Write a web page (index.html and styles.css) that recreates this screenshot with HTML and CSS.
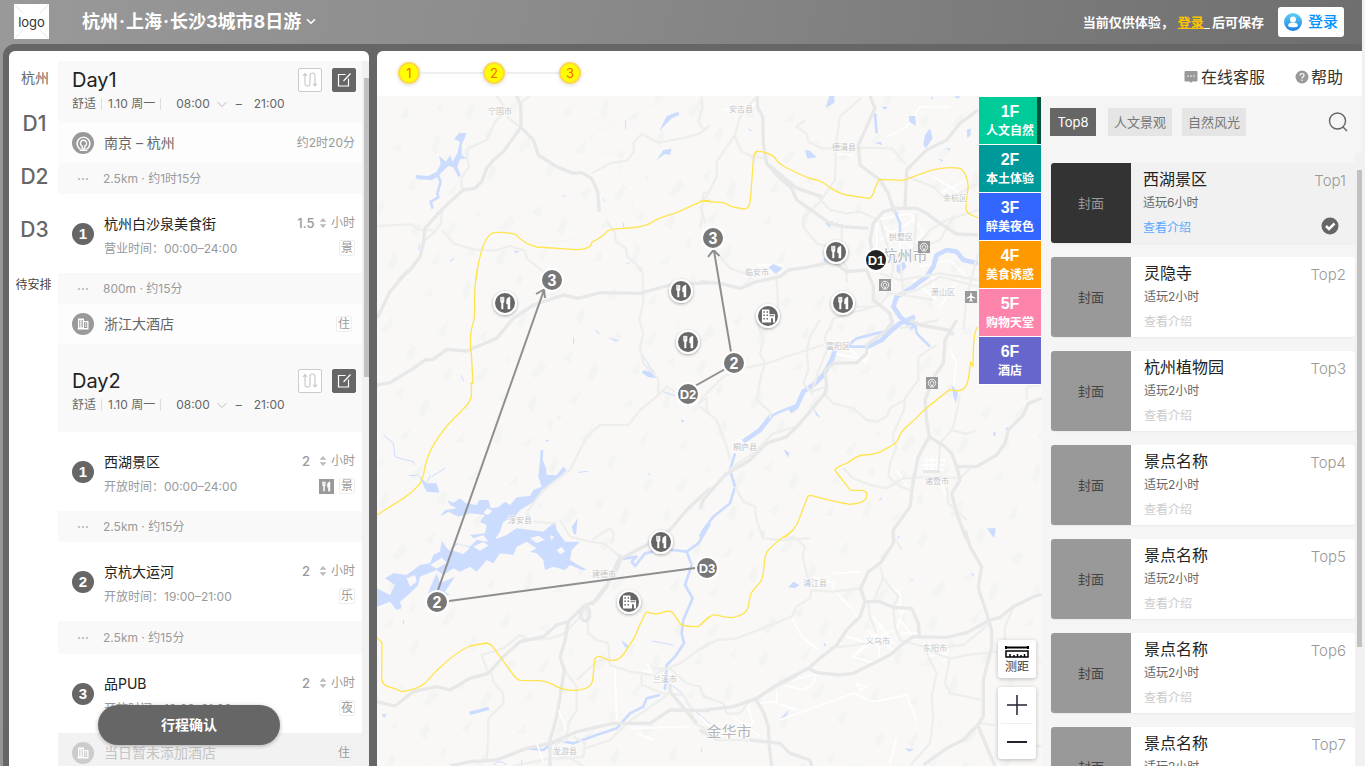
FILE: index.html
```html
<!DOCTYPE html>
<html lang="zh-CN">
<head>
<meta charset="utf-8">
<title>杭州·上海·长沙3城市8日游</title>
<link rel="stylesheet" href="styles.css">
</head>
<body>
<svg class="defs" aria-hidden="true">
  <symbol id="i-fork" viewBox="0 0 14 14"><path d="M2 1v4.400c0 .8.5 1.200 1 1.400V13h1.600V6.800c.6-.2 1-.6 1-1.400V1h-.9v3.800h-.5V1h-1v3.800h-.4V1zM11.500 1C9 1.300 8 3 8 5v3h1.300v5h2.200z" fill="currentColor" stroke="currentColor" stroke-width=".4"/></symbol>
  <symbol id="i-hotel" viewBox="0 0 16 14"><path fill="currentColor" fill-rule="evenodd" d="M1 0h8v5h6v9h-2.300V9.500h-2V14H1zM2.500 2v1.600h1.600V2zm3.400 0v1.600h1.600V2zM2.500 5.500v1.600h1.600V5.500zm3.400 0v1.600h1.600V5.500zM2.500 9v1.600h1.600V9zm3.400 0v1.600h1.600V9zM9 6.200v1h5v-1z"/></symbol>
  <symbol id="i-tower" viewBox="0 0 14 14"><path fill="currentColor" fill-rule="evenodd" d="M2 1.500h6V4h4.500v8.500H1.500V11.500H2zM3.200 3v7.500h.7V3zm1.500 0v7.500h.7V3zm1.500 0v7.500h.7V3zM8 5.300v5.800h3.200V5.300zm.9 1h1.400v1.200H8.900zm0 2.200h1.400v1.200H8.900z"/></symbol>
  <symbol id="i-metro" viewBox="0 0 16 16"><path d="M5 13.200A6 6 0 1 1 11 13.200M4.500 14.300h7" fill="none" stroke="currentColor" stroke-width="1.400"/><path d="M6.800 10.500a2.900 2.900 0 1 1 2.400 0v2.500H6.800z" fill="none" stroke="currentColor" stroke-width="1.300"/></symbol>
  <symbol id="i-route" viewBox="0 0 16 18"><path d="M3 3v9.500a2.500 2.500 0 0 0 5 0v-8a2.500 2.500 0 0 1 5 0V15M1 5l2-2.500L5 5M11 12.500l2 2.500 2-2.500" fill="none" stroke="currentColor" stroke-width="1.200"/></symbol>
  <symbol id="i-edit" viewBox="0 0 16 16"><path d="M9.500 2.500h-7v11.500h10V6.500M7.500 9L14.500 1.500" fill="none" stroke="currentColor" stroke-width="1.200"/></symbol>
  <symbol id="i-sort" viewBox="0 0 8 12"><path d="M4 0l4 4.500H0zM4 12l4-4.500H0z" fill="currentColor"/></symbol>
  <symbol id="i-down" viewBox="0 0 10 7"><path d="M.7 1.200L5 5.500 9.300 1.200" fill="none" stroke="currentColor"/></symbol>
</svg>
<div class="page">
  <header class="top">
    <div class="logo"><svg viewBox="0 0 35 35" aria-hidden="true"><path d="M1 1l8 8M34 1l-8 8M1 34l8-8M34 34l-8-8" stroke="#e4e4e4"/></svg><span>logo</span></div>
    <button class="trip">杭州<i>·</i>上海<i>·</i>长沙3城市8日游<svg viewBox="0 0 10 7"><path d="M1 1.200L5 5.200 9 1.200" fill="none" stroke="#fff" stroke-width="1.600"/></svg></button>
    <p class="hint">当前仅供体验，<a href="#login">登录<span>&nbsp;&nbsp;</span></a>后可保存</p>
    <button class="login"><svg viewBox="0 0 18 18"><defs><linearGradient id="g" x2="0" y2="1"><stop stop-color="#5fd0f7"/><stop offset="1" stop-color="#1f7fe0"/></linearGradient></defs><circle cx="9" cy="9" r="9" fill="url(#g)"/><circle cx="9" cy="6.500" r="3" fill="#fff"/><path d="M4 13c0-2.500 2-3.500 5-3.500s5 1 5 3.500c-1 1.700-9 1.700-10 0z" fill="#fff"/></svg>登录</button>
  </header>

  <div class="shell">
    <section class="plan">
      <nav class="days">
        <span class="city">杭州</span>
        <a href="#d1">D1</a><a href="#d2">D2</a><a href="#d3">D3</a>
        <a href="#todo" class="todo">待安排</a>
      </nav>
      <div class="timeline">
        <div class="day" id="d1">
          <div class="day-top"><h2>Day1</h2><button class="sq" aria-label="路线"><svg class="route"><use href="#i-route"/></svg></button><button class="sq sq-dark" aria-label="编辑"><svg class="edit"><use href="#i-edit"/></svg></button></div>
          <div class="meta"><span>舒适</span><i></i><span>1.10 周一</span><i></i><button class="time">08:00<svg><use href="#i-down"/></svg></button><span class="dash">–</span><span>21:00</span></div>
        </div>
        <div class="line"><span class="mark soft"><svg class="metro"><use href="#i-metro"/></svg></span><span class="line-name">南京 – 杭州</span><span class="note">约2时20分</span></div>
        <div class="leg"><b>···</b>2.5km · 约1时15分</div>
        <div class="spot"><span class="mark">1</span><div class="info"><h3>杭州白沙泉美食街</h3><p>营业时间：00:00–24:00</p></div><div class="side"><label><input value="1.5"><svg><use href="#i-sort"/></svg>小时</label><div class="tags"><em>景</em></div></div></div>
        <div class="leg"><b>···</b>800m · 约15分</div>
        <div class="line"><span class="mark soft"><svg><use href="#i-tower"/></svg></span><span class="line-name">浙江大酒店</span><em class="inset">住</em></div>
        <div class="day day-next" id="d2">
          <div class="day-top"><h2>Day2</h2><button class="sq" aria-label="路线"><svg class="route"><use href="#i-route"/></svg></button><button class="sq sq-dark" aria-label="编辑"><svg class="edit"><use href="#i-edit"/></svg></button></div>
          <div class="meta"><span>舒适</span><i></i><span>1.10 周一</span><i></i><button class="time">08:00<svg><use href="#i-down"/></svg></button><span class="dash">–</span><span>21:00</span></div>
        </div>
        <div class="spot"><span class="mark">1</span><div class="info"><h3>西湖景区</h3><p>开放时间：00:00–24:00</p></div><div class="side"><label><input value="2"><svg><use href="#i-sort"/></svg>小时</label><div class="tags"><span class="food"><svg><use href="#i-fork"/></svg></span><em>景</em></div></div></div>
        <div class="leg"><b>···</b>2.5km · 约15分</div>
        <div class="spot"><span class="mark">2</span><div class="info"><h3>京杭大运河</h3><p>开放时间：19:00–21:00</p></div><div class="side"><label><input value="2"><svg><use href="#i-sort"/></svg>小时</label><div class="tags"><em>乐</em></div></div></div>
        <div class="leg leg-last"><b>···</b>2.5km · 约15分</div>
        <div class="spot"><span class="mark">3</span><div class="info"><h3>品PUB</h3><p>开放时间：19:00–21:00</p></div><div class="side"><label><input value="2"><svg><use href="#i-sort"/></svg>小时</label><div class="tags"><em>夜</em></div></div></div>
        <div class="line line-empty"><span class="mark pale"><svg><use href="#i-tower"/></svg></span><span class="line-name">当日暂未添加酒店</span><em class="inset">住</em></div>
      </div>
      <div class="bar bar-plan"><i></i></div>
      <button class="confirm">行程确认</button>
    </section>

    <section class="main">
      <div class="tools">
        <ol class="steps"><li>1</li><li>2</li><li>3</li></ol>
        <a href="#chat" class="help"><svg viewBox="0 0 14 14"><path d="M1.500 1h11a1 1 0 0 1 1 1v8.500a1 1 0 0 1-1 1H8.300L7 13l-1.300-1.500H1.500a1 1 0 0 1-1-1V2a1 1 0 0 1 1-1z" fill="#999"/><path d="M3.500 5.500h1.300v1.300H3.500zM6.400 5.500h1.300v1.300H6.400zM9.300 5.500h1.300v1.300H9.300z" fill="#fff"/></svg><span>在线客服</span></a>
        <a href="#help" class="help ask"><svg viewBox="0 0 14 14"><circle cx="7" cy="7" r="6.500" fill="#999"/><path d="M5 5.600C5 4.300 5.900 3.500 7 3.500s2 .8 2 1.900C9 6.800 7 6.900 7 8.500" fill="none" stroke="#fff" stroke-width="1.200"/><circle cx="7" cy="10.300" r=".8" fill="#fff"/></svg><span>帮助</span></a>
      </div>
      <div class="work">
        <div class="mapbox">
          <svg class="map" viewBox="377 96 665 670" preserveAspectRatio="xMidYMid slice" role="img" aria-label="地图">
            <defs>
              <pattern id="hills" width="173" height="149" patternUnits="userSpaceOnUse" patternTransform="rotate(-12)"><path d="M8 12l9-6 3 5-8 8zM40 22l12-9 2 4-9 10zM75 6l4 5-3 5zM95 30l14-12 3 8-12 9zM20 50l11-11-2 12zM58 47l8-5-2 10zM84 60l9-9 4 4-8 12zM6 80l12-8-3 10zM44 88l9-16 3 6-7 14zM70 98l14-8-5 10zM100 84l6-7 2 5-5 8zM130 20l12-5-6 12zM150 44l10-14 4 6-9 13zM126 64l15-8-9 13zM12 120l14-12-6 15zM50 132l12-6-4 10zM92 126l10-13 2 8-8 11zM130 104l16-12-4 12-10 5zM150 134l8-9 4 4-7 11z" fill="#f4f4f3"/></pattern>
              <filter id="drop" x="-50%" y="-50%" width="200%" height="200%"><feDropShadow dx="0" dy="1" stdDeviation="1.500" flood-opacity=".35"/></filter>
            </defs>
            <rect x="377" y="96" width="665" height="670" fill="#f9f8f7"/><rect x="377" y="96" width="665" height="670" fill="url(#hills)"/>

            <g class="tile" transform="translate(370 510) scale(.333333)">
              <path class="water" d="M232-30L250-22 270-35 288-20 320-15 328-30 355-30 362-5 385-8 405-25 420-15 440-38 480-42 490-60 515-70 505-100 510-150 512-180 520-180 518-150 528-125 530-105 560-105 580-130 590-120 565-95 540-75 500-30 450 0 435 20 400 35 390 65 375 88 410 75 440 55 480 60 520 65 555 35 560 60 585 95 630 95 605 120 600 150 650 180 635 180 600 165 585 180 550 170 525 180 520 150 500 130 480 125 500 115 470 95 440 110 430 135 390 130 370 160 350 150 320 185 300 170 270 185 250 175 220 195 200 180 150 200 145 225 120 250 90 275 95 295 80 300 60 275 21 290 21 235 60 255 75 225 45 205 70 190 110 195 130 180 150 165 180 160 190 135 210 125 215 92 235 120 260 100 300 110 320 90 355 95 340 75 310 85 300 75 345 70 350 45 330 35 345 15 300 10 265 20 235 5 210 20 225 0 260-5 240-15zM200 190l10 30 45-20-30 45 15 10-40 0-30 5 10-25z"/>
              <path class="land" d="M235 120l30-18 35 12-20 18-25-8zM180 165l35-22 15 15-30 18zM310 110l30-15 15 12-25 15zM110 205l25-10 5 20-20 15zM480 85l25-8 20 12-25 10zM540 75l12 5-8 12zM340 10l12-15 15 8-12 12zM560 120l15-10 10 15-15 8z"/>
              <path class="water" d="M297 605L355 590 358 600 300 615zM35 612L50 612 42 625zM755 390l22 18-5 8-10-8zM605 50l18-25-5 50-8-5z"/>
              <path class="river" d="M1020 40L985 100 950 125 965 165 945 225 968 265 940 330 935 370 942 400 915 440 890 465 885 540M860 118L910 120 950 125M750 148L800 140 785 155 795 168 825 130 850 125M470 715L520 720 560 690 610 700 680 675 740 655 780 610 820 590 830 565 870 555"/>
              <path class="creek" d="M885 510L940 552M950 580L1020 642M845 393L910 405M100 330v12M370 765q20-20 40 0M455 750v18M995 715v12"/>
              <path class="road" d="M365 490L370 515 400 550 400 580 355 625 355 680 350 750M583 480L620 530 620 600 595 640 590 690M650 290L655 370 680 390 715 400 720 465 780 485 850 495 880 480 930 460 1020 395M620 510L680 455 715 445M570 30L600 80 660 95 700 100 745 135M665 90L720 55 732 70 725 100M490 35L560 40M355 490L335 435 400 415 450 375 480 390 540 385 585 370 630 320 650 290M815 495V525L880 550 940 555 960 590 975 640 1020 665M850 475L900 475 950 520 990 530 1000 560 1020 565M590 690L560 700 550 730 600 745 640 740 645 700 610 680M645 715L720 690 770 640 900 550M430 768L540 745 600 745 640 768"/>
              <path class="road hw" d="M21 575L75 588 130 545 200 530 240 540 300 505 355 490 400 440 450 395 520 380 560 345 595 335 640 290 680 270 710 230 745 150 830 105 900 60 950 0 1020-65M595 335L583 400 570 440 583 480 570 560 560 620 540 690 540 768M240 768L300 755 380 750 470 715 540 700 620 665 730 640 840 640 900 600 1020 602M900 520L900 545 980 640M650 290a14 22 0 1 0 2 40a14 22 0 0 0-2-40M745 135Q760 140 735 190L665 285"/>
              <path class="street" d="M735 475L740 630M565 600L590 660M830 460l15 30-30-10M780 655L960 650M800 670l50 20M500 700l20 55"/>
              <path class="edge" d="M21 383L36 398 35 500Q35 525 55 530 75 535 95 545 140 540 165 520 200 480 215 468 260 425 300 408L350 399Q360 400 370 412L430 495Q440 508 450 511L510 512Q540 517 560 530 585 542 610 541 665 540 668 510L674 450Q678 435 695 441 720 455 740 450 760 440 775 410 795 385 805 355L825 312Q830 303 840 309 865 315 880 306 900 300 910 310L930 340Q935 350 985 350L1020 319"/>
            </g>
            <g class="tile" transform="translate(370 270) scale(.333333)">
              <path class="water" d="M815 308L820 300 840 305 825 290 850 300 862 325 835 322zM145 615L170 640 200 640 208 668 170 665zM560 445l20-10-15 10zM525 510l12 0-4 6zM832 608l10 12-4-10zM932 450l10 0-4 10zM670 175l20 15-5 2zM710 200l38 12-12 2zM385 745l20-10 15 8z"/>
              <path class="creek" d="M40 495L70 520 75 560 100 568 130 575 132 585M170 638L182 615M185 620L225 595M117 617L145 615M273 315l8 18M611 202v20M815 250l30 50M835 400l40-35M880 365l35 12M625 607l28-3"/>
              <path class="road" d="M800-10L818 10 820 95 808 150 820 190 810 230 820 280 865 325 865 375M915 365L890 350 865 375 810 420 775 465 690 465 650 500 600 600 520 660 475 720 470 750M985 400L1010 385 1010 420 1020 430"/>
              <path class="road hw" d="M115 0L60 65 21 145M21 345L60 338 130 295 165 270 190 268 230 238 290 243 380 205 430 145 490 105 580 75 625 85 690 68 810 70 900 45 1020 38"/>
              <path class="edge" d="M322 0Q312 50 314 110 315 150 305 175 298 210 304 250L309 340 303 338Q308 380 298 395 285 415 250 447 180 520 165 590 160 625 150 640 130 665 100 685L21 735"/>
            </g>
            <g class="tile" transform="translate(370 40) scale(.333333)">
              <path class="water" d="M290 280L268 278 252 297 270 305 262 340 248 365 240 345 228 365 207 347 212 372 200 395 175 408 137 405 140 418 185 420 205 410 212 400 235 378 250 382 265 412 272 405 262 380 270 358 290 355 275 345 275 315zM868 273L890 228 925 215 928 225 905 235zM860 360L880 330 905 326 900 345 885 342zM575 462l14 10-8-2zM695 473l14 14-10-6zM240 662l14-12-8 14zM432 630l18 6-14 3z"/>
              <path class="river" d="M205 408L212 425 202 460 205 472 182 485 188 506"/>
              <path class="creek" d="M767 240v28M760 548v16M150 610l-5 20M770 672l8-4"/>
              <path class="road dash" d="M655 235L730 230 735 260 680 270 660 300 690 340 750 335 755 430 790 470 790 515 820 515M660 550L640 580 600 600 500 610 440 580 360 555M820 168L835 195 860 200 880 168"/>
              <path class="road" d="M21 558L125 553 150 570 190 570M215 515L213 550 190 580 165 600M412 210L375 245 350 300 295 325 290 350 298 380 275 410 275 445M380 168L400 195 415 235 453 262M480 168L455 185M215 570L250 610 310 628 375 632 420 618 465 632 470 655 520 695M710 543L733 575 738 605 768 625 772 650 818 690M665 400L725 368 770 362 792 335 790 310 815 282 865 308 950 292 990 280 1020 255M995 168L998 205 985 245 1000 268M1020 455L1000 460 995 520 1008 550"/>
              <path class="road hw" d="M440 168L452 195 453 262 400 335 370 360 350 385 335 425 315 445 280 450 240 485 205 520 165 565 160 610 150 650 120 690 85 720M453 262L490 300 505 345 560 380 610 400 635 398 665 415 683 455 688 515"/>
              <path class="edge" d="M317 720Q335 590 370 578 410 575 438 584 460 610 500 621L620 629Q665 628 665 607 700 590 710 575 725 565 760 565 820 562 840 550 860 535 920 518 980 490 1000 482L1020 481"/>
            </g>
            <g class="tile" transform="translate(700 80) scale(.333333)">
              <path class="street" d="M530 420l100-20 40 60-60 70-80 10zM550 440l110 80M540 480l100-60M600 400v140M700 290l100 60M720 340l80-40M660 560l90-20 60 60M640 600l70 60M700 560v110M720 680l60-90M70 90l100-20-40 30M400 220l60 5M170 555h80M560 170l60-30 40-60 90 0"/>
              <path class="water" d="M388 48h15v20l-25 15zM315 210l15 2 20 20-28 4zM627 108l18 0 3 30-20-12zM675 165l15-20 8 30-20 30-8-10zM545 80l18 0-8 10zM525 190l18-5 3 10zM800 150l12-5 0 20-10 10zM740 205l10-2-2 12zM715 235l14 5-4 6zM760 50l22-2-8 8zM205 562l15-10 28 12-20 18zM370 540l8-14 12 18-12 10zM590 555L612 545 620 560 600 582 590 575zM375 430l25-8-12 20zM140 142l18 12-8-2zM205 348l28 2zM285 450l12 12zM692 50l8 0-4 10z"/>
              <path class="river wide" d="M834 550L790 540 770 515 740 510 710 525 700 560 680 590 640 620 590 650 580 680 600 710 640 745"/>
              <path class="river" d="M575 370L600 430 600 460M525 100L530 160"/>
              <path class="road" d="M105 170L125 215 160 230 195 235M165 55L120 110 105 165 50 245 50 290 20 350 0 365M0 65L8 80 0 100M485 52L420 110 408 190 405 300 360 365 310 415 310 440 350 490 400 505 440 560 440 610M315 120L290 140 320 160 325 185 365 205 480 203 575 205 615 250M240 300L350 345 390 390 440 400 480 395 535 420M0 445L10 400 0 380M60 530L90 565 150 585M230 595L235 690M620 290L700 320 740 360 834 310M834 390L740 420 690 450 650 500 610 520M834 520L800 650 790 750M600 640L650 630 720 590 834 620M390 750L400 715 450 700 540 675 570 640 640 650 700 660M525 530L640 535 650 400M600 530L610 640M650 510L720 480 760 410M425 430V540M540 580L600 600 720 580 834 600M470 680L520 680M540 420L580 560 560 650M715 720L600 745M190 750L240 690"/>
              <path class="road hw" d="M172 48L172 80 188 110 190 190 200 250 235 290 275 325 290 360 340 395 390 430 430 440 505 445M200 250L290 325 365 350M510 48L525 85 500 140 475 195 480 255 540 300 565 340 583 400M834 90L780 130 740 180 680 210 660 230 620 270 615 380M500 570L520 530 510 480 520 430 550 395 590 385 650 385 680 400 720 430 770 462 834 465M0 605L60 610 120 625 170 605 240 590 265 570 320 562 400 545 440 575 500 570 520 620 520 660 570 700 580 750"/>
              <path class="edge" d="M0 363L70 368Q80 372 95 380L130 387Q150 388 152 350L160 240Q162 212 175 214 200 215 222 230 235 250 250 258 300 285 335 297 350 298 360 303 375 310 390 323 420 342 440 345L505 355Q515 355 522 335 532 300 540 298L610 301 690 272Q740 258 780 265 800 275 805 320 800 345 798 385 800 400 815 405L834 414"/>
            </g>
            <g class="tile" transform="translate(700 320) scale(.333333)">
              <path class="street" d="M670 420h65M665 435h70M670 450h60M680 410v50M695 410v50M712 410v50M400 100l100 20 20-60 30-30M440 80l60 50M110 360l50 10-30 20M750 90l20 40-10 70M720 480l20 50M590 450l30 50"/>
              <path class="water" d="M860 625h27l-4 30-8-14zM755 195l20 25-8 30-8-25zM250 388l18 10-4 15zM340 263l22 32-14-10zM615 5l40 0-10 20zM915 325l14-5-8 14zM880 337h7v10h-7zM535 540l12-8-4 8z"/>
              <path class="river wide" d="M645-10L600 10 570 35 545 60 500 82"/><path class="river" d="M500 80L440 80 470 55 550 35M645 10L650 40 690 80M105 400L90 450 105 500 90 550 40 590 10 630 0 650M270 275L290 255 240 275 210 290"/><path class="river wide" d="M405 90L395 120 370 165 340 195 310 215 290 260 270 275M215 285L180 330 130 365"/>
              <path class="road" d="M400 0L375 50 380 90 355 155 335 215 380 200M360 0L330 50 320 90 325 150 310 190 340 225M0 240L70 170 130 145 200 130 320 90 370 75M170 0L190 60 180 100 195 130 185 160 170 240 210 275 210 295M375 225L400 250 460 265 500 300 530 305 560 290 570 265 610 240M710 75L655 110 655 180 640 200 615 235 612 270 580 340 580 365 590 380 570 430 565 470 600 500 630 510M780 225L765 300 755 330 720 370 715 450M755 330L800 342 828 330M980 240V200L1025 195M0 260L50 300 65 340 80 380 90 420M430 445L460 475 510 495 560 505 610 475 700 470 780 475 810 445M105 500L130 545 165 560 170 600 190 660M740 500L745 550 800 600M240 660L330 655M0 540L100 440 160 400 220 340 290 320"/>
              <path class="road hw" d="M0 565L10 540 75 465 150 420 200 370 260 350 300 310 375 220 380 200 375 150 400 130 470 128 500 100 500 75 560 30 580 0M770 0L735 60 730 130 705 165 675 240 680 300 688 350 655 410 640 480 630 560 580 630 580 660M688 350L735 380 755 400 770 440 780 480 755 520 770 580 800 660M770 440L830 440 890 405 915 370 925 330 970 285 985 250 1025 235M630 0L660 15 745 30 760 45M670 455L720 455"/>
              <path class="edge" d="M243 660Q290 630 300 590L323 530Q325 525 335 527 400 545 450 553 500 550 501 525 500 510 480 511L455 511Q450 510 445 503L404 450Q410 440 440 430 475 405 490 405 530 405 560 385 590 370 592 362 605 330 620 320 650 295 670 272 740 215 750 209 800 225 806 170L812 125 819 140 820 90Q822 30 834 20"/>
            </g>
            <g class="tile" transform="translate(700 530) scale(.333333)">
              <path class="street" d="M500 300l80 60M490 340l90-40M520 260l60 80M530 300l10 90M470 370l80-90M440 320l70 20-50 40 60 20M600 270l50 60M600 310h60M550 150l50 40v60M610 240l-20 60M340 140l60 20 0 20 60 60 15 30M400 130l80-5M275 260l30 60 50 40M230 460l90-20 30-10-10 30-30 20zM230 480v40l60 20M170 520l60-5M240 570L460 490 520 515 620 495 650 575M590 620L570 700M0 560l60 60 100-40-20-60M100 560l80 60M680 380l60-10-10 30M470 460l30 10-20 10z"/>
              <path class="water" d="M265 172L280 155 298 165 285 175zM370 338l8 4-4 10zM613 655l30 2-15 8zM815 128l8 5-4 8zM632 145l8 4-5 3zM240 565l30-25-15 20zM590 25l8-10 0 10zM865 0h20l-6 22zM385 487l10 5z"/>
              <path class="road" d="M0 360L50 330 110 325 200 290 275 260 290 230 330 205 335 180 400 185 480 175M190 0L190 25 240 30 280 20 315 50 308 80 325 150M0 480L15 500 70 520 80 550 120 550 150 510M0 600L50 630 150 630M540 110L550 145 530 190 520 215M550 145L595 200 580 230 585 290 600 330 670 350 710 430 695 500 700 560 690 640 630 708M505 220L510 260 530 310M580 20L605 60M750 380L735 460 750 490 800 500 840 510M690 365L750 385 800 375 890 365M740 350L790 345 870 280M390 355L500 340M940 235L915 290 915 340M840 580L885 585M1025 650L900 620M200 485L290 440"/>
              <path class="road hw" d="M580 0L580 40 540 100 505 125 482 175 495 215 480 260 440 300 410 345 360 385 325 415 230 465 170 505 100 530 0 542M495 215L540 215 580 232 635 235 655 280 658 320M325 415L350 428 420 435 460 430 520 400 570 375 610 340 640 320 740 322 800 308 870 270 900 262 940 230 1000 200 1025 193M795 0L810 50 845 110 835 170 840 190 860 250 875 300 875 350 850 450 850 560 833 585 790 630 740 655 670 705M833 585L860 650 885 708M165 505L190 545 205 590 208 650 215 708M0 600L50 628M150 630L240 640 270 670 330 690 335 708"/>
              <path class="edge" d="M0 285Q30 255 45 254 85 265 100 262 140 255 145 230 150 190 160 180L178 160Q190 145 192 110 195 70 205 60 240 25 260 15L280 0"/>
            </g>

            <g class="place"><text x="500" y="114">宁国市</text><text x="741" y="112">安吉县</text><text x="844" y="150">德清县</text><text x="955" y="201">余杭区</text><text x="901" y="240">拱墅区</text><text x="757" y="275">临安市</text><text x="943" y="295">萧山区</text><text x="838" y="349">富阳区</text><text x="745" y="450">桐庐县</text><text x="937" y="484">诸暨市</text><text x="520" y="523">淳安县</text><text x="604" y="577">建德市</text><text x="815" y="586">浦江县</text><text x="878" y="644">义乌市</text><text x="935" y="651">东阳市</text><text x="665" y="682">兰溪市</text><text x="565" y="754">龙游县</text><text class="big" x="905" y="261">杭州市</text><text class="big" x="729" y="737">金华市</text></g>

            <g class="path"><path d="M695 386L727 368M731 352L714 251M708 257l5.500-7 6 6M438 590L544 290M536 294l8-4.500 1 8.500M449 601L695 568"/></g>
            <g class="pins"><circle cx="713" cy="238" r="11"/><circle cx="552" cy="280" r="11"/><circle cx="734" cy="363" r="11"/><circle cx="437" cy="602" r="11"/><circle cx="688" cy="394" r="11"/><circle cx="707" cy="568" r="11"/><circle cx="876" cy="260" r="11" class="now"/>
              <text x="713" y="244">3</text><text x="552" y="286">3</text><text x="734" y="369">2</text><text x="437" y="608">2</text><text class="dn" x="688" y="399">D2</text><text class="dn" x="707" y="573">D3</text><text class="dn" x="876" y="265">D1</text></g>
            <g class="poi" filter="url(#drop)"><circle cx="505" cy="303" r="11"/><circle cx="681" cy="291" r="11"/><circle cx="688" cy="342" r="11"/><circle cx="836" cy="252" r="11"/><circle cx="843" cy="303" r="11"/><circle cx="661" cy="542" r="11"/><circle cx="768" cy="316" r="11"/><circle cx="629" cy="602" r="11"/></g>
            <g color="#fff"><use href="#i-fork" x="498" y="296" width="15" height="14"/><use href="#i-fork" x="674" y="284" width="15" height="14"/><use href="#i-fork" x="681" y="335" width="15" height="14"/><use href="#i-fork" x="829" y="245" width="15" height="14"/><use href="#i-fork" x="836" y="296" width="15" height="14"/><use href="#i-fork" x="654" y="535" width="15" height="14"/><use href="#i-hotel" x="761" y="309" width="15" height="14"/><use href="#i-hotel" x="622" y="595" width="15" height="14"/></g>
            <g class="stop"><rect x="918" y="241" width="12" height="12"/><rect x="879" y="279" width="12" height="12"/><rect x="926" y="377" width="12" height="12"/><rect x="965" y="291" width="12" height="12"/></g>
            <g color="#fff"><use href="#i-metro" x="919" y="242" width="10" height="10"/><use href="#i-metro" x="880" y="280" width="10" height="10"/><use href="#i-metro" x="927" y="378" width="10" height="10"/><path d="M971 292.500l.8 1.200v2l3.500 2v1l-3.500-.9v2.200l1.200.9v.7l-2-.4-2 .4v-.7l1.200-.9v-2.200l-3.500.9v-1l3.500-2v-2z" fill="#fff"/></g>
          </svg>
          <nav class="floors">
            <a href="#f1" class="f1"><b>1F</b>人文自然</a><a href="#f2" class="f2"><b>2F</b>本土体验</a><a href="#f3" class="f3"><b>3F</b>醉美夜色</a><a href="#f4" class="f4"><b>4F</b>美食诱惑</a><a href="#f5" class="f5"><b>5F</b>购物天堂</a><a href="#f6" class="f6"><b>6F</b>酒店</a>
          </nav>
          <div class="controls">
            <button class="measure"><svg viewBox="0 0 24 12"><path d="M0 1.500h24M1 0v3M23 0v3" stroke="#000" stroke-width="2"/><path d="M1 5h22v6H1zM5 11V8M9 11V9M12.500 11V8M16 11V9M19.500 11V8" fill="none" stroke="#000" stroke-width="1.500"/></svg>测距</button>
            <div class="zoom"><button aria-label="放大"><svg viewBox="0 0 20 20"><path d="M10 0v20M0 10h20" stroke="#223" stroke-width="1.500"/></svg></button><button aria-label="缩小"><svg viewBox="0 0 20 20"><path d="M0 10h20" stroke="#223" stroke-width="2"/></svg></button></div>
          </div>
        </div>
        <aside class="rank">
          <div class="filters"><button class="on">Top8</button><button>人文景观</button><button>自然风光</button><button class="search" aria-label="搜索"><svg viewBox="0 0 20 20"><circle cx="9.500" cy="9" r="8" fill="none" stroke="#666" stroke-width="1.400"/><path d="M15 15l4 4" stroke="#666" stroke-width="1.400"/></svg></button></div>
          <div class="scroll">
            <div class="cards">
              <article class="chosen"><div class="cover">封面</div><div class="text"><h3>西湖景区</h3><p>适玩6小时</p><a href="#s1">查看介绍</a></div><div class="end">Top1<svg viewBox="0 0 18 18"><circle cx="9" cy="9" r="8.500" fill="#666"/><path d="M5 9l3 3 5.500-5.500" fill="none" stroke="#fff" stroke-width="2.500"/></svg></div></article>
              <article><div class="cover">封面</div><div class="text"><h3>灵隐寺</h3><p>适玩2小时</p><a href="#s2">查看介绍</a></div><div class="end">Top2</div></article>
              <article><div class="cover">封面</div><div class="text"><h3>杭州植物园</h3><p>适玩2小时</p><a href="#s3">查看介绍</a></div><div class="end">Top3</div></article>
              <article><div class="cover">封面</div><div class="text"><h3>景点名称</h3><p>适玩2小时</p><a href="#s4">查看介绍</a></div><div class="end">Top4</div></article>
              <article><div class="cover">封面</div><div class="text"><h3>景点名称</h3><p>适玩2小时</p><a href="#s5">查看介绍</a></div><div class="end">Top5</div></article>
              <article><div class="cover">封面</div><div class="text"><h3>景点名称</h3><p>适玩2小时</p><a href="#s6">查看介绍</a></div><div class="end">Top6</div></article>
              <article><div class="cover">封面</div><div class="text"><h3>景点名称</h3><p>适玩2小时</p><a href="#s7">查看介绍</a></div><div class="end">Top7</div></article>
            </div>
            <div class="bar bar-rank"><i></i></div>
          </div>
        </aside>
      </div>
    </section>
  </div>
</div>
</body>
</html>
```

FILE: styles.css
```css
* { box-sizing: border-box; }
body, h2, h3, p, ol { margin: 0; padding: 0; }
html, body { height: 100%; }
body {
  overflow: hidden;
  background: #f1f1f1;
  color: #666;
  font: 400 12px/16px Inter, "Noto Sans CJK SC", sans-serif;
}
button, input { font: inherit; color: inherit; border: 0; padding: 0; background: none; }
a { color: inherit; text-decoration: none; }
em, i { font-style: normal; }
.defs { display: none; }

.page {
  display: flex;
  flex-direction: column;
  height: 100vh;
  margin-right: 3px;
  background: linear-gradient(100deg, #999 0%, #8c8c8c 35%, #6a6a6a 100%);
}

/* header */
.top { display: flex; align-items: center; height: 44px; padding: 0 18px 1px 14px; flex: none; color: #fff; }
.logo { position: relative; display: flex; align-items: center; justify-content: center; width: 35px; height: 35px; background: #fff; color: #333; font-size: 13px; }
.logo svg { position: absolute; inset: 0; }
.logo span { position: relative; }
.trip { display: flex; align-items: center; margin-left: 33px; font-size: 18px; line-height: 24px; font-weight: 700; }
.trip i { width: 8px; text-align: center; }
.trip svg { width: 10px; height: 7px; margin-left: 5px; }
.hint { margin-left: auto; font-size: 13px; font-weight: 700; }
.hint a { margin-left: 4px; color: #ffc400; text-decoration: underline; }
.hint a span { padding-right: 2px; color: #fff; text-decoration: underline; }
.login { display: flex; align-items: center; justify-content: center; gap: 6px; width: 66px; height: 30px; margin-left: 14px; border-radius: 3px; background: #fff; color: #0090ff; font-size: 15px; font-weight: 500; }
.login svg { width: 18px; height: 18px; }

.shell { display: flex; gap: 8px; flex: 1; min-height: 0; margin-left: 3px; padding: 7px 0 0 6px; border-radius: 12px 0 0 0; background: #666; }

/* itinerary */
.plan { position: relative; display: flex; flex: none; width: 360px; padding-top: 10px; border-radius: 6px 6px 0 0; background: #fff; overflow: hidden; }
.days { display: flex; flex-direction: column; align-items: center; width: 49px; flex: none; color: #666; }
.days .city { margin: 7px 0 26px; padding-left: 3px; font-size: 14px; line-height: 20px; }
.days a { height: 53px; padding-left: 2px; font-size: 21px; line-height: 20px; font-weight: 500; }
.days a.todo { padding-left: 0; margin-top: 2px; font-size: 12px; font-weight: 400; color: #444; }
.timeline { flex: 1; min-width: 0; overflow: hidden; }
.bar { display: flex; flex-direction: column; align-items: flex-end; width: 7px; flex: none; background: #f1f1f1; }
.bar i { width: 5px; background: #c1c1c1; }
.bar-plan i { height: 299px; margin-top: 17px; }

.day { height: 62px; padding: 6px 6px 0 14px; background: #f9f9f9; }
.day-next { height: 88px; padding-top: 24px; }
.day-top { display: flex; align-items: center; gap: 10px; height: 26px; }
h2 { margin-right: auto; color: #222; font-size: 20px; line-height: 26px; font-weight: 400; }
.sq { display: flex; align-items: center; justify-content: center; width: 24px; height: 24px; border: 1px solid #ccc; border-radius: 2px; color: #ccc; background: #fff; }
.sq-dark { border-color: #666; background: #666; color: #fff; }
.sq .route { width: 16px; height: 18px; }
.sq .edit { width: 16px; height: 16px; }
.meta { display: flex; align-items: center; height: 22px; }
.meta i { width: 1px; height: 12px; margin: 0 6px 0 5px; background: #ddd; }
.meta .time { display: flex; align-items: center; gap: 7px; margin-left: 9px; }
.meta svg { width: 10px; height: 7px; color: #bbb; }
.meta .dash { margin: 0 12px 0 9px; }

.line, .leg, .spot { display: flex; align-items: center; padding: 0 7px 0 14px; }
.line { height: 40px; background: #fdfdfd; }
.mark { display: flex; align-items: center; justify-content: center; width: 22px; height: 22px; flex: none; margin-right: 10px; border-radius: 50%; background: #666; color: #fff; font: 700 15px/16px "Liberation Sans", sans-serif; }
.mark svg { width: 14px; height: 14px; }
.mark .metro { width: 17px; height: 17px; }
.soft { background: #999; }
.pale { background: #ccc; }
.line-name { margin-right: auto; font-size: 14px; }
.note { color: #999; }
.line-empty { background: #f2f2f2; }
.line-empty .line-name { color: #c4c4c4; }
.leg { height: 31px; background: #f9f9f9; color: #999; }
.leg-last { height: 33px; }
.leg b { width: 31px; padding-left: 5px; color: #bbb; }
.spot { height: 79px; background: #fff; }
.info, .side { padding-top: 4px; }
.info { margin-right: auto; }
.info h3 { color: #222; font-size: 14px; line-height: 25px; font-weight: 400; }
.info p { color: #999; line-height: 25px; }
.side { color: #999; }
.side label { display: flex; align-items: center; justify-content: flex-end; gap: 4px; height: 25px; }
.side input { width: 24px; height: 20px; margin-right: -3px; text-align: center; font-size: 13px; font-weight: 500; }
.side label svg { width: 8px; height: 10px; color: #bbb; }
.tags { display: flex; align-items: center; justify-content: flex-end; gap: 5px; height: 25px; }
em { width: 16px; height: 16px; border: 1px solid #eee; border-radius: 2px; color: #999; line-height: 14px; text-align: center; }
.inset { margin-right: 3px; }
.food { display: flex; width: 15px; height: 15px; align-items: center; justify-content: center; background: #999; color: #fff; }
.food svg { width: 11px; height: 11px; }
.confirm { position: absolute; left: 89px; bottom: 21px; width: 182px; height: 40px; border-radius: 20px; background: #666; color: #fff; font-size: 14px; font-weight: 700; box-shadow: 0 1px 4px rgba(0, 0, 0, .3); }

/* main */
.main { display: flex; flex-direction: column; flex: 1; min-width: 0; border-radius: 6px 0 0 0; overflow: hidden; background: #fff; }
.tools { display: flex; align-items: center; height: 45px; flex: none; padding: 0 19px 1px 21px; }
.steps { display: flex; margin-right: auto; list-style: none; }
.steps li { display: flex; align-items: center; justify-content: center; position: relative; width: 22px; height: 22px; margin-right: 54px; border: 2px solid #ffd84a; border-radius: 50%; background: #ff0; color: #f60; font-size: 13px; box-shadow: 0 1px 4px rgba(0, 0, 0, .15); }
.steps li:first-child { margin-right: 63px; }
.steps li::after { content: ""; position: absolute; left: 20px; top: 8px; width: 54px; height: 2px; background: #eee; }
.steps li:first-child::after { width: 63px; }
.steps li:last-child::after { display: none; }
.help { display: flex; align-items: center; gap: 3px; padding-top: 8px; color: #333; font-size: 16px; line-height: 20px; }
.help svg { width: 14px; height: 14px; }
.ask { margin-left: 30px; gap: 2px; }
.work { display: flex; flex: 1; min-height: 0; }
.mapbox { position: relative; flex: 1; min-width: 0; overflow: hidden; background: #f9f8f7; }
.map { display: block; width: 100%; height: 100%; }
.tile path { fill: none; stroke-linejoin: round; }
.tile .water { fill: #ccdcff; }
.tile .land { fill: #f9f8f7; }
.river { stroke: #ccdcff; stroke-width: 8px; }
.wide { stroke-width: 14px; }
.creek { stroke: #ccdcff; stroke-width: 3px; }
.road { stroke: #eeeeed; stroke-width: 7px; }
.hw { stroke: #e7e8e7; stroke-width: 10px; }
.dash { stroke-width: 2px; stroke-dasharray: 6 5; }
.street { stroke: #fff; stroke-width: 5px; }
.edge { stroke: #ffe450; stroke-width: 4px; }
.place { fill: #c3c4c7; font-size: 8px; text-anchor: middle; stroke: #fff; stroke-width: 2px; stroke-opacity: .6; paint-order: stroke; }
.place .big { font-size: 15px; fill: #b5b6b8; }
.path path { fill: none; stroke: #8f8f8f; stroke-width: 2px; }
.pins circle { fill: #777; stroke: #fff; stroke-width: 2px; }
.pins .now { fill: #222; }
.pins text { fill: #fff; font: 700 16px "Liberation Sans", sans-serif; text-anchor: middle; }
.pins .dn { font-size: 13px; }
.poi circle { fill: #666; stroke: #fff; stroke-width: 2px; }
.stop rect { fill: #999; }

.floors { position: absolute; top: 0; right: 1px; display: grid; gap: 1px; padding: 1px 0; width: 62px; background: #fff; }
.floors a { height: 47px; padding-top: 5px; color: #fff; font-weight: 700; text-align: center; line-height: 20px; }
.floors b { display: block; font: 700 16px/19px "Liberation Sans", sans-serif; }
.floors .f1 { background: #00cc99; box-shadow: inset -4px 0 #00523e; }
.floors .f2 { background: #009999; }
.floors .f3 { background: #3366ff; }
.floors .f4 { background: #ff9900; }
.floors .f5 { background: #ff84ac; }
.floors .f6 { background: #6666cc; }
.controls { position: absolute; right: 6px; bottom: 7px; width: 38px; display: grid; gap: 9px; }
.measure, .zoom { background: #fff; border-radius: 3px; box-shadow: 0 1px 4px rgba(0, 0, 0, .25); }
.measure { display: flex; flex-direction: column; align-items: center; gap: 1px; height: 38px; padding-top: 6px; color: #444; }
.measure svg { width: 24px; height: 12px; flex: none; }
.zoom { padding: 0 3px; }
.zoom button { display: flex; align-items: center; justify-content: center; width: 100%; height: 36px; }
.zoom button + button { border-top: 1px solid #eee; }
.zoom svg { width: 20px; height: 20px; }

/* ranking */
.rank { display: flex; flex-direction: column; width: 320px; flex: none; background: #f5f5f5; }
.filters { display: flex; align-items: center; gap: 10px; height: 57px; flex: none; padding: 0 14px 5px 8px; }
.filters button { height: 28px; width: 64px; background: #e5e5e5; color: #777; font-size: 13px; }
.filters .on { width: 46px; margin-right: 2px; background: #666; color: #fff; }
.filters .search { width: 20px; height: 20px; margin-left: auto; background: none; }
.scroll { display: flex; flex: 1; min-height: 0; overflow: hidden; }
.cards { flex: 1; display: grid; grid-auto-rows: 80px; align-content: start; gap: 14px; padding: 10px 0 0 9px; }
article { display: flex; background: #fff; border-radius: 3px; box-shadow: 0 1px 2px rgba(0, 0, 0, .05); overflow: hidden; }
.cover { display: flex; align-items: center; justify-content: center; width: 80px; background: #999; color: #444; font-size: 13px; }
.text { flex: 1; padding: 4px 0 0 13px; }
.text h3 { color: #222; font-size: 16px; line-height: 24px; font-weight: 400; }
.text p { line-height: 24px; }
.text a { color: #ccc; line-height: 26px; }
.end { display: flex; flex-direction: column; align-items: flex-end; justify-content: space-between; padding: 10px 9px 8px 0; color: #999; font-size: 15px; font-weight: 300; }
.end svg { width: 18px; height: 18px; margin-right: 7px; }
.chosen { background: #f1f1f1; }
.chosen .cover { background: #333; color: #999; }
.chosen .text { padding-left: 12px; }
.chosen .text a { color: #5aa9ff; }
.bar-rank i { height: 477px; margin-top: 17px; }
```
